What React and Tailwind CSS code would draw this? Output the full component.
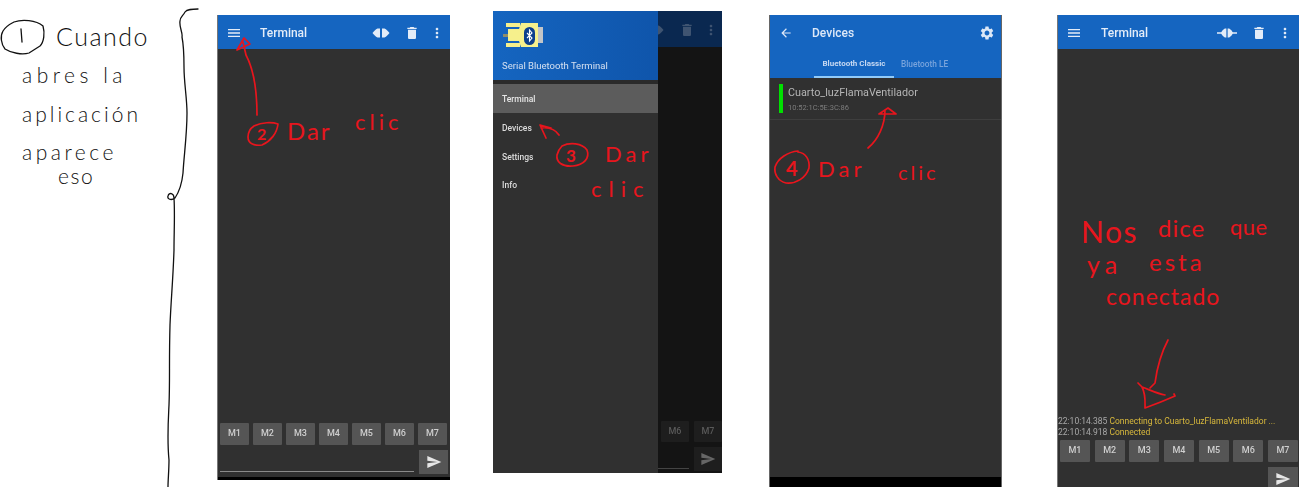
import { MdMenu, MdDelete, MdMoreVert, MdSettings, MdArrowBack, MdSend } from "react-icons/md";

const macros = ["M1", "M2", "M3", "M4", "M5", "M6", "M7"];
const hand = "absolute whitespace-nowrap font-['Lato',sans-serif] leading-none";

// Plug icon in the toolbar, pushed together with wires once connected
function ConnectIcon({ connected, className }) {
  if (connected) {
    return (
      <svg viewBox="0 0 20 10" className={className} fill="currentColor">
        <path d="M0 4.300h5v1.400H0zM15 4.300h5v1.400h-5z" />
        <path d="M9.400 0.500H7.800C6 1.500 4.600 3.300 4 5c.6 1.700 2 3.500 3.800 4.500h1.600z" />
        <path d="M10.600 0.500h1.600C14 1.500 15.400 3.300 16 5c-.6 1.700-2 3.500-3.800 4.500h-1.600z" />
      </svg>
    );
  }
  return (
    <svg viewBox="0 0 18 10" className={className} fill="currentColor">
      <path d="M8 0.500H5.500C3.600 1.500 1.800 3.200 0.500 5c1.300 1.800 3.100 3.500 5 4.500H8z" />
      <path d="M10 0.500h2.500c1.900 1 3.700 2.700 5 4.500-1.300 1.800-3.100 3.500-5 4.500H10z" />
    </svg>
  );
}

// Connector logo of the app
function AppLogo() {
  return (
    <svg viewBox="0 0 40 30" className="w-[40px] h-[30px]">
      <rect x="0" y="13" width="5" height="3" fill="#8d8d6a" />
      <path d="M3 2h14v4H3zM3 22h14v4H3z" fill="#f6f08c" />
      <path d="M5 8h11l2-6h17v24H18l-2-6H5z" fill="#f6f08c" />
      <rect x="35" y="6" width="5" height="16" fill="#c2c5c8" />
      <rect x="21" y="6" width="11" height="18" rx="5.500" fill="#0d3f8c" />
      <path d="M24 12l5 5-2.500 3v-11l2.500 3-5 5" fill="none" stroke="#fff" strokeWidth="1.100" />
    </svg>
  );
}

function ToolIcons({ connected }) {
  return (
    <div className="ml-auto flex items-center">
      <ConnectIcon connected={connected} className={connected ? "w-[20px] h-[10px]" : "w-[18px] h-[10px]"} />
      <MdDelete className="w-[16px] h-[16px] ml-[14px]" />
      <MdMoreVert className={connected ? "w-[16px] h-[16px] ml-[10px]" : "w-[16px] h-[16px] ml-[9px]"} />
    </div>
  );
}

function TerminalBar({ connected }) {
  return (
    <div className={`h-[34px] shrink-0 bg-[#1565c0] text-[#e3ecf8] flex items-center pl-[8px] pt-[2px] ${connected ? "pr-[6px]" : "pr-[5px]"}`}>
      <MdMenu className="w-[16px] h-[16px]" />
      <span className={`text-[12px] font-medium ${connected ? "ml-[19px]" : "ml-[18px]"}`}>Terminal</span>
      <ToolIcons connected={connected} />
    </div>
  );
}

function MacroButton({ label, className }) {
  return (
    <div className={`bg-[#555] text-[#cfcfcf] rounded-[1px] flex items-center justify-center text-[9px] font-medium ${className}`}>
      {label}
    </div>
  );
}

function TerminalPhone() {
  return (
    <div className="w-[233px] h-[465px] mt-[15px] flex flex-col bg-[#303030] border-l border-[#777] blur-[0.4px] overflow-hidden">
      <TerminalBar />
      <div className="flex-1" />
      <div className="flex gap-[4px] pl-[2px]">
        {macros.map((m) => (
          <MacroButton key={m} label={m} className="w-[29px] h-[22px]" />
        ))}
      </div>
      <div className="flex items-end gap-[5px] pl-[2px] mt-[5px] mb-[3px]">
        <div className="w-[194px] mb-[2px] border-b border-[#8a8a8a]" />
        <div className="w-[29px] h-[24px] bg-[#555] text-[#e6e6e6] flex items-center justify-center">
          <MdSend className="w-[16px] h-[16px]" />
        </div>
      </div>
      <div className="h-[3px] bg-black" />
    </div>
  );
}

function DrawerPhone() {
  return (
    <div className="w-[229px] h-[462px] mt-[11px] ml-[43px] flex blur-[0.4px] overflow-hidden">
      <div className="w-[165px] shrink-0 bg-[#303030]">
        <div className="h-[69px] bg-gradient-to-r from-[#1565c0] to-[#0f55ab] pl-[9px] pt-[10px]">
          <div className="ml-[1px]">
            <AppLogo />
          </div>
          <p className="mt-[8px] text-[9.500px] text-[#d5e0f0]">Serial Bluetooth Terminal</p>
        </div>
        <div className="h-[4px] bg-[#2a2a2a]" />
        <div className="h-[29px] bg-[#5c5c5c] flex items-center pl-[9px] pt-[1px] text-[8.500px] font-medium text-[#e6e6e6]">Terminal</div>
        <div className="flex flex-col text-[8.500px] font-medium text-[#dcdcdc] pl-[9px] pt-[10px] gap-[17.500px] leading-[11px]">
          <span>Devices</span>
          <span>Settings</span>
          <span>Info</span>
        </div>
      </div>
      <div className="flex-1 min-w-0 flex flex-col bg-[#141414]">
        <div className="h-[36px] shrink-0 bg-[#0a2850] text-[#3f5471] flex items-center overflow-hidden pt-[2px]">
          <ConnectIcon className="w-[18px] h-[10px] shrink-0 -ml-[12px]" />
          <MdDelete className="w-[16px] h-[16px] shrink-0 ml-[15px]" />
          <MdMoreVert className="w-[16px] h-[16px] shrink-0 ml-[8px]" />
        </div>
        <div className="flex-1" />
        <div className="flex justify-end gap-[5px]">
          <MacroButton label="M6" className="w-[28px] h-[21px] !bg-[#1e1e1e] !text-[#5a5a5a]" />
          <MacroButton label="M7" className="w-[28px] h-[21px] !bg-[#1e1e1e] !text-[#5a5a5a]" />
        </div>
        <div className="flex items-end gap-[5px] mt-[5px] mb-[2px]">
          <div className="w-[31px] mb-[2px] border-b border-[#444]" />
          <div className="w-[28px] h-[24px] bg-[#1e1e1e] text-[#666] flex items-center justify-center">
            <MdSend className="w-[16px] h-[16px]" />
          </div>
        </div>
      </div>
    </div>
  );
}

function DevicesPhone() {
  return (
    <div className="w-[233px] h-[472px] mt-[15px] ml-[47px] flex flex-col bg-[#303030] border-x border-[#666] blur-[0.4px] overflow-hidden">
      <div className="h-[63px] shrink-0 bg-[#1565c0] text-[#dde8f7]">
        <div className="h-[36px] flex items-center pl-[9px] pr-[6px]">
          <MdArrowBack className="w-[14px] h-[14px]" />
          <span className="ml-[19px] text-[12px] font-medium">Devices</span>
          <MdSettings className="ml-auto w-[16px] h-[16px]" />
        </div>
        <div className="flex h-[27px] pl-[44px]">
          <div className="w-[80px] pt-[1px] flex items-center justify-center border-b-2 border-[#90caf9] text-[8px] font-bold text-[#c6d8f1]">Bluetooth Classic</div>
          <div className="ml-[7px] flex items-center text-[8.300px] font-medium text-[#79a4dc]">Bluetooth LE</div>
        </div>
      </div>
      <div className="h-[42px] flex items-start pl-[9px] pt-[6px] border-b border-[#3e3e3e]">
        <div className="w-[4px] h-[29px] bg-[#00e000]" />
        <div className="ml-[5px] pt-[2px]">
          <p className="text-[10.800px] leading-[13px] text-[#b5b5b5]">Cuarto_luzFlamaVentilador</p>
          <p className="text-[7.500px] leading-[12px] mt-[3px] text-[#7d7d7d]">10:52:1C:5E:3C:86</p>
        </div>
      </div>
      <div className="flex-1" />
      <div className="h-[10px] bg-black" />
    </div>
  );
}

function ConnectedPhone() {
  return (
    <div className="w-[242px] h-[476px] mt-[15px] ml-[55px] flex flex-col bg-[#303030] border-l border-[#777] blur-[0.4px] overflow-hidden">
      <TerminalBar connected />
      <div className="flex-1 flex flex-col justify-end text-[8.500px] leading-[10.500px] text-[#a8a8a8] mb-[3px]">
        <p className="whitespace-nowrap">22:10:14.385 <span className="text-[#d8b83c]">Connecting to Cuarto_luzFlamaVentilador ...</span></p>
        <p>22:10:14.918 <span className="text-[#d8b83c]">Connected</span></p>
      </div>
      <div className="flex justify-between pl-[2px] pr-[1px]">
        {macros.map((m) => (
          <MacroButton key={m} label={m} className="w-[30px] h-[22px]" />
        ))}
      </div>
      <div className="flex justify-end pr-[1px] mt-[5px]">
        <div className="w-[30px] h-[24px] bg-[#555] text-[#e6e6e6] flex items-center justify-center">
          <MdSend className="w-[16px] h-[16px]" />
        </div>
      </div>
    </div>
  );
}

// Hand drawn marks, coordinates are taken on the whole canvas
function Strokes() {
  return (
    <svg viewBox="0 0 1308 487" className="absolute inset-0 w-[1308px] h-[487px] pointer-events-none" fill="none" strokeLinecap="round" strokeLinejoin="round">
      <g stroke="#111" strokeWidth="1.300">
        <path d="M14 22C22 19 36 20 43 26C45 33 44 42 40 46L29 53C22 55 11 53 5 49C1 44 0 36 3 31C6 26 10 24 14 22Z" />
        <path d="M21 29L22 42" />
        <path d="M198 9C192 9 187 9 185 12C183 16 180 17 180 21C179 27 183 33 182 37C184 47 184 57 184 67C184 83 187 98 187 113C187 135 184 155 183 173C182 183 179 192 175 198C171 201 167 199 168 196C169 192 174 193 174 198C175 215 174 232 174 250C173 280 171 300 170 325C169 360 170 380 169 405C168 425 167 440 169 460C169 470 168 480 168 487" />
      </g>
      <g stroke="#e8151d" strokeWidth="1.700">
        <path d="M257 115C257 92 254 70 246 55L243 42" />
        <path d="M237 50L244 38L250 44Z" />
        <path d="M254 126C262 122 272 122 278 124C277 133 271 141 262 145C255 146 248 144 248 137C248 132 251 128 254 126Z" />
        <path d="M559 135C555 129 549 127 541 128M540 125L546 138M540 125L551 128" />
        <path d="M562 146C570 142 582 143 587 150C590 158 584 165 573 166C562 167 556 162 557 155C558 151 560 148 562 146Z" />
        <path d="M868 148C878 140 885 125 885 110M879 114L888 108L896 114Z" />
        <path d="M798 152C806 153 810 160 809 168C806 178 796 184 786 183C778 181 774 174 775 167C778 158 788 152 798 151" />
        <path d="M1168 340C1160 355 1157 368 1155 383L1150 388" />
        <path d="M1138 383L1142 387C1150 390 1158 394 1165 395M1142 387C1146 395 1145 402 1145 408C1156 404 1166 400 1175 396L1174 394" />
      </g>
    </svg>
  );
}

function Annotations() {
  return (
    <>
      <Strokes />
      <span className={`${hand} font-light left-[56px] top-[24px] text-[25px] tracking-[1.500px] text-[#111]`}>Cuando</span>
      <span className={`${hand} font-light left-[22px] top-[64px] text-[21px] tracking-[4.500px] text-[#111]`}>abres la</span>
      <span className={`${hand} font-light left-[22px] top-[103px] text-[21px] tracking-[3px] text-[#111]`}>aplicación</span>
      <span className={`${hand} font-light left-[22px] top-[141px] text-[21px] tracking-[3.500px] text-[#111]`}>aparece</span>
      <span className={`${hand} font-light left-[58px] top-[165px] text-[21px] tracking-[1.500px] text-[#111]`}>eso</span>

      <span className={`${hand} left-[257px] top-[126px] text-[16px] font-bold text-[#e8151d]`}>2</span>
      <span className={`${hand} left-[287px] top-[119px] text-[24px] tracking-[2px] text-[#e8151d]`}>Dar</span>
      <span className={`${hand} left-[355px] top-[111px] text-[22px] tracking-[4px] text-[#e8151d]`}>clic</span>

      <span className={`${hand} left-[566px] top-[147px] text-[17px] font-bold text-[#e8151d]`}>3</span>
      <span className={`${hand} left-[605px] top-[143px] text-[22px] tracking-[4px] text-[#e8151d]`}>Dar</span>
      <span className={`${hand} left-[591px] top-[178px] text-[22px] tracking-[7px] text-[#e8151d]`}>clic</span>

      <span className={`${hand} left-[786px] top-[158px] text-[20px] font-bold text-[#e8151d]`}>4</span>
      <span className={`${hand} left-[818px] top-[158px] text-[22px] tracking-[4px] text-[#e8151d]`}>Dar</span>
      <span className={`${hand} left-[898px] top-[162px] text-[20px] tracking-[3px] text-[#e8151d]`}>clic</span>

      <span className={`${hand} left-[1081px] top-[216px] text-[30px] tracking-[1.500px] text-[#e8151d]`}>Nos</span>
      <span className={`${hand} left-[1158px] top-[216px] text-[24px] tracking-[1px] text-[#e8151d]`}>dice</span>
      <span className={`${hand} left-[1230px] top-[216px] text-[22px] tracking-[0.500px] text-[#e8151d]`}>que</span>
      <span className={`${hand} left-[1087px] top-[252px] text-[25px] tracking-[5px] text-[#e8151d]`}>ya</span>
      <span className={`${hand} left-[1149px] top-[250px] text-[24px] tracking-[3px] text-[#e8151d]`}>esta</span>
      <span className={`${hand} left-[1106px] top-[285px] text-[23px] tracking-[1px] text-[#e8151d]`}>conectado</span>
    </>
  );
}

export default function App() {
  return (
    <div className="relative w-[1308px] h-[487px] bg-white overflow-hidden font-['Roboto',sans-serif]">
      <div className="flex items-start pl-[217px]">
        <TerminalPhone />
        <DrawerPhone />
        <DevicesPhone />
        <ConnectedPhone />
      </div>
      <Annotations />
    </div>
  );
}
